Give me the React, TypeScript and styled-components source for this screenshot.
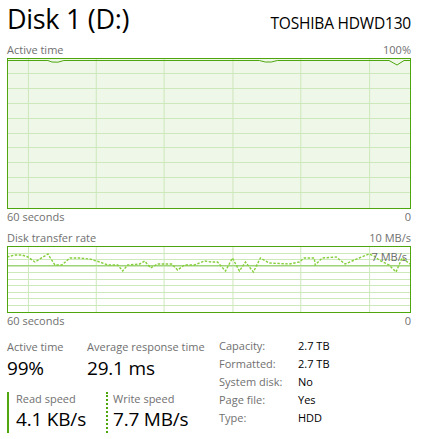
import React from 'react';
import styled, { createGlobalStyle } from 'styled-components';

const GlobalStyle = createGlobalStyle`
  body {
    margin: 0;
    background: #ffffff;
    font-family: 'Open Sans', 'Liberation Sans', sans-serif;
  }
`;

const GREEN = '#4da60c';
const GRID = '#cde8ba';

const activeTimeLine = [
  [0, 1.5], [40, 1.5], [44, 3], [50, 3.2], [56, 1.5], [252, 1.5], [258, 3], [264, 3],
  [270, 1.5], [382, 1.5], [390, 6], [397, 1.5], [403, 1.5],
];

const writeAbs = [
  [7, 257], [15, 255], [22, 255], [28, 257], [35, 262], [48, 254], [55, 265], [62, 265],
  [70, 258], [80, 258], [90, 259], [100, 262], [108, 265], [118, 265], [123, 271],
  [128, 265], [140, 264], [145, 261], [151, 268], [158, 264], [172, 264], [178, 270],
  [185, 265], [195, 265], [205, 261], [212, 262], [218, 262], [226, 271], [233, 258],
  [240, 271], [246, 262], [254, 272], [261, 258], [270, 263], [290, 264], [300, 262],
  [305, 258], [315, 258], [316, 265], [323, 258], [337, 257], [346, 264], [360, 258],
  [370, 254], [375, 256], [380, 260], [390, 265], [397, 272], [403, 258], [411, 264],
];
const writeLine = writeAbs.map(([x, y]) => [x - 8, y - 247]);

const toPath = (pts: number[][]) =>
  pts.map(([x, y], i) => `${i ? 'L' : 'M'}${x} ${y}`).join(' ');

const Page = styled.div`
  width: 425px;
  height: 439px;
  box-sizing: border-box;
  padding: 0 14px 0 7px;
  overflow: hidden;
  color: #000;
`;

const Header = styled.div`
  display: flex;
  justify-content: space-between;
  align-items: baseline;
  height: 42px;
`;

const Title = styled.h1`
  margin: 0;
  font-weight: 400;
  font-size: 27px;
  line-height: 38px;
  letter-spacing: -0.3px;
`;

const Model = styled.div`
  font-size: 15.5px;
  letter-spacing: -0.2px;
`;

const AxisRow = styled.div<{ $gap?: number }>`
  display: flex;
  justify-content: space-between;
  font-size: 11px;
  line-height: 16px;
  color: #707070;
  margin-top: ${(p) => p.$gap ?? 0}px;
`;

const ChartBox = styled.div<{ $h: number; $fill: string }>`
  position: relative;
  height: ${(p) => p.$h}px;
  border: 1px solid ${GREEN};
  background: ${(p) => p.$fill};

  svg {
    display: block;
    width: 100%;
    height: 100%;
  }
`;

const ScaleTag = styled.span`
  position: absolute;
  top: 3px;
  right: 3px;
  font-size: 11px;
  line-height: 14px;
  color: #6a6a6a;
`;

const Stats = styled.div`
  display: grid;
  grid-template-columns: 212px 1fr;
  margin-top: 9px;
`;

const StatColumn = styled.div`
  display: flex;
  flex-direction: column;
  gap: 10px;
`;

const StatRow = styled.div`
  display: flex;
`;

const Stat = styled.div<{ $w: number; $bar?: 'solid' | 'dotted' }>`
  display: flex;
  flex-direction: column;
  width: ${(p) => p.$w}px;
  box-sizing: border-box;
  ${(p) =>
    p.$bar
      ? `border-left: 2px ${p.$bar} ${GREEN}; padding-left: ${p.$bar === 'solid' ? 7 : 5}px;`
      : ''}
`;

const StatLabel = styled.span<{ $tight?: boolean }>`
  font-size: 11px;
  line-height: ${(p) => (p.$tight ? 14 : 17)}px;
  color: #707070;
  white-space: nowrap;
`;

const StatValue = styled.span`
  font-size: 19px;
  line-height: 27px;
  letter-spacing: -0.2px;
  white-space: nowrap;
`;

const Props = styled.dl`
  display: grid;
  grid-template-columns: 79px 1fr;
  grid-auto-rows: 18px;
  margin: -1px 0 0;
  font-size: 11px;
  line-height: 18px;
`;

const PropName = styled.dt`
  color: #707070;
`;

const PropValue = styled.dd`
  margin: 0;
  color: #000;
`;

const vLines = [20, 88, 156, 225, 293, 362];

const Chart: React.FC<{
  w: number;
  h: number;
  rows: number;
  fill: string;
  tag?: string;
  children?: React.ReactNode;
}> = ({ w, h, rows, fill, tag, children }) => (
  <ChartBox $h={h} $fill={fill}>
    <svg viewBox={`0 0 ${w} ${h}`} preserveAspectRatio="none" shapeRendering="crispEdges">
      {vLines.map((x) => (
        <line key={x} x1={x + 0.5} y1={0} x2={x + 0.5} y2={h} stroke={GRID} strokeWidth={1} />
      ))}
      {Array.from({ length: rows - 1 }, (_, i) => {
        const y = Math.round(((i + 1) * h) / rows) - 0.5;
        return <line key={i} x1={0} y1={y} x2={w} y2={y} stroke={GRID} strokeWidth={1} />;
      })}
      {children}
    </svg>
    {tag && <ScaleTag>{tag}</ScaleTag>}
  </ChartBox>
);

const App: React.FC = () => {
  return (
    <Page>
      <GlobalStyle />
      <Header>
        <Title>Disk 1 (D:)</Title>
        <Model>TOSHIBA HDWD130</Model>
      </Header>

      <AxisRow>
        <span>Active time</span>
        <span>100%</span>
      </AxisRow>
      <Chart w={403} h={149} rows={10} fill="#eff7e9">
        <path
          d={toPath(activeTimeLine)}
          fill="none"
          stroke={GREEN}
          strokeWidth={1}
          shapeRendering="geometricPrecision"
        />
      </Chart>
      <AxisRow>
        <span>60 seconds</span>
        <span>0</span>
      </AxisRow>

      <AxisRow $gap={5}>
        <span>Disk transfer rate</span>
        <span>10 MB/s</span>
      </AxisRow>
      <Chart w={403} h={65} rows={10} fill="#ffffff" tag="7 MB/s">
        <line x1={0} y1={18.5} x2={403} y2={18.5} stroke="#9fd37a" strokeWidth={1.5} />
        <path
          d={toPath(writeLine)}
          fill="none"
          stroke="#86cf3c"
          strokeWidth={1.4}
          strokeDasharray="2.5 1.5"
          shapeRendering="geometricPrecision"
        />
      </Chart>
      <AxisRow>
        <span>60 seconds</span>
        <span>0</span>
      </AxisRow>

      <Stats>
        <StatColumn>
          <StatRow>
            <Stat $w={80}>
              <StatLabel>Active time</StatLabel>
              <StatValue>99%</StatValue>
            </Stat>
            <Stat $w={125}>
              <StatLabel>Average response time</StatLabel>
              <StatValue>29.1 ms</StatValue>
            </Stat>
          </StatRow>
          <StatRow>
            <Stat $w={99} $bar="solid">
              <StatLabel $tight>Read speed</StatLabel>
              <StatValue>4.1 KB/s</StatValue>
            </Stat>
            <Stat $w={106} $bar="dotted">
              <StatLabel $tight>Write speed</StatLabel>
              <StatValue>7.7 MB/s</StatValue>
            </Stat>
          </StatRow>
        </StatColumn>
        <Props>
          <PropName>Capacity:</PropName>
          <PropValue>2.7 TB</PropValue>
          <PropName>Formatted:</PropName>
          <PropValue>2.7 TB</PropValue>
          <PropName>System disk:</PropName>
          <PropValue>No</PropValue>
          <PropName>Page file:</PropName>
          <PropValue>Yes</PropValue>
          <PropName>Type:</PropName>
          <PropValue>HDD</PropValue>
        </Props>
      </Stats>
    </Page>
  );
};

export default App;
